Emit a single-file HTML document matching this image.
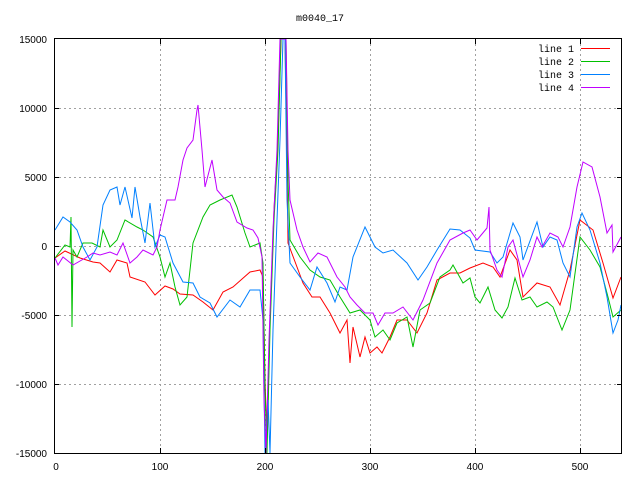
<!DOCTYPE html><html><head><style>body{margin:0;background:#fff}svg{display:block}text{font-family:"Liberation Sans",sans-serif;font-size:10px;fill:#000}</style></head><body>
<svg width="640" height="480" xmlns="http://www.w3.org/2000/svg">
<defs><clipPath id="c"><rect x="54" y="39" width="568" height="415"/></clipPath></defs>
<text x="320" y="21" text-anchor="middle" style="font-family:'Liberation Mono',monospace">m0040_17</text>
<g stroke="#a0a0a0" stroke-dasharray="2,3" stroke-width="1">
<path d="M160.5 39V453M265.5 39V453M370.5 39V453M475.5 39V453M580.5 39V453"/>
<path d="M54 108.5H622M54 177.5H622M54 246.5H622M54 315.5H622M54 384.5H622"/>
</g>
<g text-anchor="end">
<text x="47" y="43">15000</text><text x="47" y="112">10000</text><text x="47" y="181">5000</text><text x="47" y="250">0</text><text x="47" y="319">-5000</text><text x="47" y="388">-10000</text><text x="47" y="457">-15000</text>
</g>
<g text-anchor="middle">
<text x="56" y="470">0</text><text x="160" y="470">100</text><text x="265" y="470">200</text><text x="370" y="470">300</text><text x="475" y="470">400</text><text x="580" y="470">500</text>
</g>
<g fill="none" stroke-width="1" clip-path="url(#c)">
<polyline stroke="#ff0000" points="55,258 65,251 80,258 93,262 100,263 110,272 117,260 127,263 130,277 145,282 155,295 165,286 173,289 180,294 193,295 203,302 213,310 223,292 233,287 250,272 260,270 263,277 265,380 267,440 270,320 274,210 278,140 281,39 285,39 287,160 288,243 297,267 303,283 312,297 320,297 330,313 340,333 347,320 350,363 353,327 360,357 365,337 370,353 377,347 382,353 390,337 397,320 407,320 417,333 427,313 437,280 450,273 460,273 470,268 483,263 493,267 500,277 510,250 517,260 523,297 537,283 550,287 560,305 570,270 580,220 593,230 603,263 613,298 621,277"/>
<polyline stroke="#00c000" points="55,258 65,245 70,247 71,217 72,327 73,250 77,257 83,243 92,243 100,247 103,230 110,247 117,240 125,220 137,227 143,230 153,237 160,257 165,277 170,263 175,287 180,305 187,297 193,243 203,217 210,205 220,200 232,195 237,207 245,233 250,247 260,243 263,263 265,390 267,453 270,330 274,220 278,150 281,39 286,39 288,180 290,240 300,257 310,270 320,277 330,280 340,297 350,313 360,310 370,320 375,337 383,330 390,340 397,323 407,317 413,347 420,310 430,303 440,277 450,270 453,265 463,283 470,278 475,297 480,303 488,287 495,310 502,318 508,307 515,278 522,300 530,297 537,307 547,302 553,307 562,330 570,310 580,237 590,250 600,267 608,297 613,317 621,310"/>
<polyline stroke="#0080ff" points="55,230 63,217 70,222 77,230 83,247 90,260 97,247 103,205 110,190 117,187 120,205 125,187 132,218 135,187 140,217 145,243 150,203 155,247 160,235 165,237 173,263 183,282 193,283 200,297 210,303 217,317 230,300 240,307 250,290 260,290 263,320 265,453 268,400 270,453 273,330 277,220 280,140 283,39 285,39 287,200 290,263 300,277 310,290 317,267 327,283 335,302 340,287 347,290 353,257 365,227 375,247 383,253 393,250 407,263 418,280 427,267 437,250 450,229 460,230 470,238 475,250 490,252 497,263 503,257 513,223 520,237 523,260 537,222 543,247 550,237 557,240 563,263 570,277 577,227 582,213 590,230 600,263 607,297 613,333 618,320 621,305"/>
<polyline stroke="#c000ff" points="55,258 58,265 63,257 73,265 87,257 93,253 100,255 110,252 117,255 123,243 130,263 137,257 143,250 153,255 157,247 160,230 167,200 175,200 178,187 183,160 187,148 193,140 197,110 198,105 202,150 205,187 212,160 217,190 223,197 230,203 237,222 247,228 253,230 258,238 262,257 264,400 266,453 269,340 273,230 277,150 280,39 286,39 288,150 290,200 297,230 303,247 310,262 318,253 327,257 337,277 345,287 350,297 357,305 365,313 373,313 378,325 385,313 393,313 403,307 413,320 423,300 437,263 450,240 463,233 470,230 477,240 487,228 489,207 490,250 497,270 502,277 508,247 513,240 523,277 530,260 537,237 542,247 550,233 558,237 563,247 570,227 577,187 583,162 592,167 600,197 607,233 612,225 613,252 621,237"/>
</g>
<rect x="54.5" y="38.5" width="567" height="415" fill="none" stroke="#000"/>
<g stroke="#000"><path d="M54 108.5h5M54 177.5h5M54 246.5h5M54 315.5h5M54 384.5h5M622 108.5h-5M622 177.5h-5M622 246.5h-5M622 315.5h-5M622 384.5h-5M160.5 453v-5M265.5 453v-5M370.5 453v-5M475.5 453v-5M580.5 453v-5M160.5 39v5M265.5 39v5M370.5 39v5M475.5 39v5M580.5 39v5"/></g>
<g text-anchor="end" style="font-family:'Liberation Mono',monospace">
<text x="574" y="52" style="font-family:'Liberation Mono',monospace">line 1</text>
<text x="574" y="65" style="font-family:'Liberation Mono',monospace">line 2</text>
<text x="574" y="78" style="font-family:'Liberation Mono',monospace">line 3</text>
<text x="574" y="91" style="font-family:'Liberation Mono',monospace">line 4</text>
</g>
<path d="M581 48.5h29" stroke="#ff0000"/><path d="M581 61.5h29" stroke="#00c000"/><path d="M581 74.5h29" stroke="#0080ff"/><path d="M581 87.5h29" stroke="#c000ff"/>
</svg></body></html>
